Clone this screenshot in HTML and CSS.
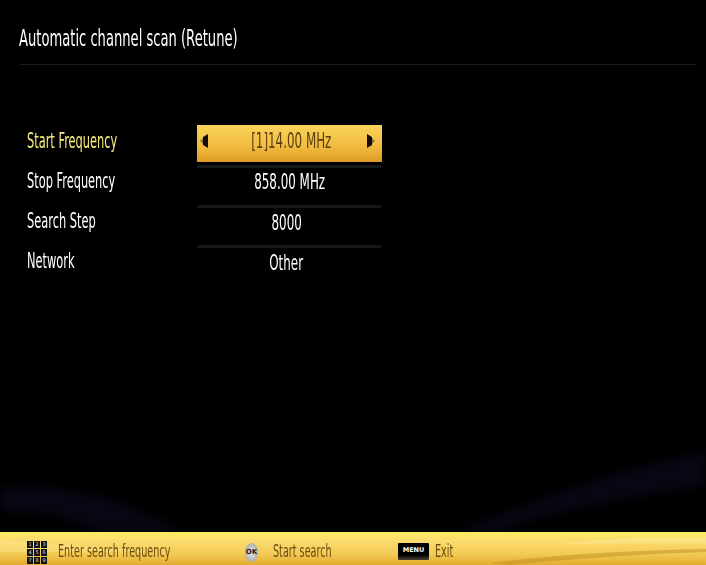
FILE: index.html
```html
<!DOCTYPE html>
<html lang="en">
<head>
  <meta charset="UTF-8">
  <meta name="viewport" content="width=device-width, initial-scale=1.0">
  <title>Automatic channel scan</title>
  <link rel="stylesheet" href="styles.css">
</head>
<body>
  <div class="screen">
    <svg class="swoosh" width="706" height="92" viewBox="0 0 706 92">
      <path d="M0 48 C70 42 130 62 185 92 L100 92 C70 76 30 68 0 72 Z" fill="#060713"/>
      <path d="M455 92 C530 62 620 28 706 12 L706 46 C620 58 545 74 495 92 Z" fill="#060713"/>
    </svg>

    <div class="header">
      <h1 class="title"><span class="squeeze">Automatic channel scan (Retune)</span></h1>
    </div>

    <div class="form">
      <div class="row active">
        <div class="label"><span class="squeeze">Start Frequency</span></div>
        <div class="value">
          <svg class="arrow arrow-left" width="9" height="14" viewBox="0 0 9 14">
            <polygon points="0,7 3,4 3,10" fill="#8a7a50"/>
            <polygon points="3,3 8,0 8,14 3,11" fill="#120c02"/>
          </svg>
          <span class="squeeze">[1]14.00 MHz</span>
          <svg class="arrow arrow-right" width="9" height="14" viewBox="0 0 9 14">
            <polygon points="9,7 6,4 6,10" fill="#8a7a50"/>
            <polygon points="6,3 1,0 1,14 6,11" fill="#120c02"/>
          </svg>
        </div>
      </div>
      <div class="row">
        <div class="label"><span class="squeeze">Stop Frequency</span></div>
        <div class="value"><span class="squeeze">858.00 MHz</span></div>
      </div>
      <div class="row">
        <div class="label"><span class="squeeze">Search Step</span></div>
        <div class="value"><span class="squeeze">8000</span></div>
      </div>
      <div class="row">
        <div class="label"><span class="squeeze">Network</span></div>
        <div class="value"><span class="squeeze">Other</span></div>
      </div>
    </div>

    <div class="footer">
      <svg class="footer-shine" width="706" height="33" viewBox="0 0 706 33" preserveAspectRatio="none">
        <path d="M0 8 C40 12 90 14 160 20 L0 20 Z" fill="#fff0a0" opacity="0.3"/>
        <path d="M490 31 C560 22 640 18 706 17 L706 20 C640 22 570 27 510 33 Z" fill="#b98a1c" opacity="0.45"/>
        <path d="M560 12 C610 6 660 4 706 5 L706 12 C660 11 610 12 560 12 Z" fill="#fff3a8" opacity="0.3"/>
      </svg>
      <div class="hint hint-digits">
        <div class="keypad">
          <span>1</span><span>2</span><span>3</span>
          <span>4</span><span>5</span><span>6</span>
          <span>7</span><span>8</span><span>9</span>
        </div>
        <span class="squeeze">Enter search frequency</span>
      </div>
      <div class="hint hint-ok">
        <div class="ok-key">OK</div>
        <span class="squeeze">Start search</span>
      </div>
      <div class="hint hint-menu">
        <div class="menu-key">MENU</div>
        <span class="squeeze">Exit</span>
      </div>
    </div>
  </div>
</body>
</html>
```

FILE: styles.css
```css
html, body{
  margin: 0;
  padding: 0;
  background-color: #000;
}
.screen{
  position: relative;
  width: 706px;
  height: 565px;
  overflow: hidden;
  display: flex;
  flex-direction: column;
  background-color: #000;
  color: #fff;
  font-family: "DejaVu Sans", sans-serif;
}
.swoosh{
  position: absolute;
  left: 0;
  top: 440px;
  filter: blur(5px);
}
.squeeze{
  display: inline-block;
  transform: scale(0.7, 1.25);
  white-space: nowrap;
}
.header{
  margin: 0 10px 0 20px;
  height: 64px;
  border-bottom: 1px solid #1a1c26;
}
.title{
  margin: 0;
  padding-top: 25px;
  margin-left: -1px;
  font-size: 19px;
  line-height: 24px;
  font-weight: normal;
}
.title .squeeze{
  transform: scale(0.69, 1.25);
  transform-origin: left center;
}
.form{
  margin-top: 60px;
  padding-left: 27px;
  flex: 1;
}
.row{
  display: grid;
  grid-template-columns: 170px 185px;
  height: 40px;
  box-sizing: border-box;
}
.label{
  font-size: 16.5px;
  line-height: 34px;
}
.label .squeeze{
  transform: scale(0.69, 1.25);
  transform-origin: left center;
}
.value{
  position: relative;
  text-align: center;
  font-size: 17px;
  line-height: 29px;
  height: 37px;
  width: 184px;
  box-sizing: border-box;
  border-top: 3px solid #14181a;
  padding-left: 2px;
}
.row:nth-child(3) .value,
.row:nth-child(4) .value{
  padding-left: 0;
  padding-right: 5px;
  line-height: 31px;
}
.row.active .label{
  color: #f7ec7c;
}
.row.active .value{
  width: 185px;
  padding-left: 4px;
  color: #5a3e0c;
  background: linear-gradient(#fad25a, #f0bb3e 60%, #db9b22);
  border-top: none;
  line-height: 33px;
}
.arrow{
  position: absolute;
  top: 9px;
}
.arrow-left{
  left: 3px;
}
.arrow-right{
  right: 7px;
}
.footer{
  position: relative;
  height: 33px;
  display: flex;
  align-items: center;
  padding-left: 27px;
  color: #6a4c10;
  font-size: 14.5px;
  background: linear-gradient(#fdeb60, #fbdc70 25%, #f3cb55 65%, #e3ac30);
}
.footer-shine{
  position: absolute;
  left: 0;
  top: 0;
}
.hint{
  position: relative;
  display: flex;
  align-items: center;
  line-height: 40px;
}
.hint .squeeze{
  transform: scale(0.665, 1.2);
  transform-origin: left center;
  padding-top: 4px;
}
.hint-digits{
  width: 217px;
}
.hint-ok{
  width: 154px;
}
.keypad{
  display: grid;
  grid-template-columns: repeat(3, 6px);
  grid-auto-rows: 7px;
  column-gap: 1px;
  row-gap: 1px;
  margin-top: 7px;
  margin-right: 11px;
  font-size: 5px;
  line-height: 7px;
  text-align: center;
  color: #ddd;
}
.keypad span{
  background-color: #111;
}
.ok-key{
  width: 13px;
  height: 19px;
  margin-top: 7px;
  border-radius: 50%;
  margin-right: 15px;
  margin-left: 1px;
  background: radial-gradient(#e8e8e8, #b4b4b4 65%, #5a5a5a);
  color: #222;
  font-size: 7px;
  font-weight: bold;
  line-height: 19px;
  text-align: center;
}
.menu-key{
  width: 31px;
  height: 17px;
  margin-top: 6px;
  margin-right: 6px;
  border-radius: 1px;
  background: linear-gradient(#000 70%, #4a4030);
  color: #fff;
  font-size: 6.5px;
  font-weight: bold;
  line-height: 15px;
  text-align: center;
}
```
